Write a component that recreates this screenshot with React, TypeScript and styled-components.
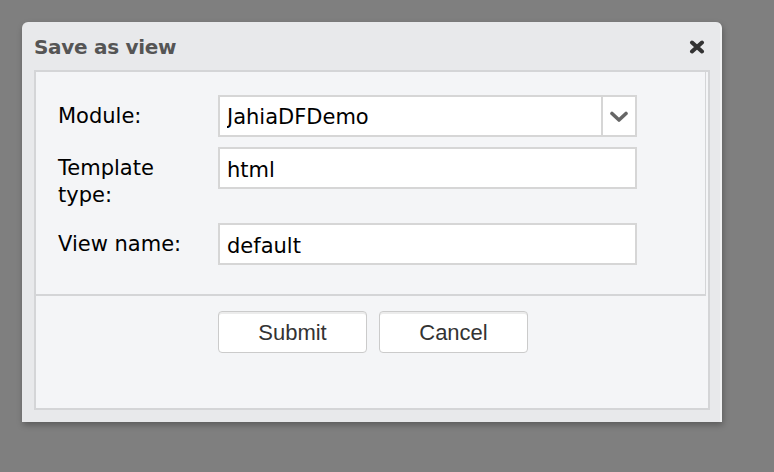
import React, { useState } from 'react'
import styled, { createGlobalStyle } from 'styled-components'

const GlobalStyle = createGlobalStyle`
  html, body {
    margin: 0;
    padding: 0;
    background: #7f7f7f;
    height: 100%;
  }
  body {
    font-family: "DejaVu Sans", Verdana, sans-serif;
  }
`

const CloseIcon = () => (
  <svg width="16" height="14" viewBox="0 0 16 14">
    <path
      d="M3 2.5 L13 11.5 M13 2.5 L3 11.5"
      stroke="#333"
      strokeWidth="4"
      strokeLinecap="round"
      fill="none"
    />
  </svg>
)

const ChevronIcon = () => (
  <svg width="20" height="12" viewBox="0 0 20 12">
    <path
      d="M3 2.5 L10 9 L17 2.5"
      stroke="#666"
      strokeWidth="3.6"
      strokeLinecap="round"
      strokeLinejoin="round"
      fill="none"
    />
  </svg>
)

export default function App() {
  const [module, setModule] = useState('JahiaDFDemo')
  const [templateType, setTemplateType] = useState('html')
  const [viewName, setViewName] = useState('default')

  return (
    <>
      <GlobalStyle />
      <Window>
        <TitleBar>
          <Title>Save as view</Title>
          <CloseButton aria-label="Close">
            <CloseIcon />
          </CloseButton>
        </TitleBar>
        <Body>
          <Form>
            <Row>
              <Label>Module:</Label>
              <Combo>
                <ComboInput
                  value={module}
                  onChange={e => setModule(e.target.value)}
                />
                <ComboTrigger>
                  <ChevronIcon />
                </ComboTrigger>
              </Combo>
            </Row>
            <Row>
              <Label>Template type:</Label>
              <TextField
                value={templateType}
                onChange={e => setTemplateType(e.target.value)}
              />
            </Row>
            <Row>
              <Label>View name:</Label>
              <TextField
                value={viewName}
                onChange={e => setViewName(e.target.value)}
              />
            </Row>
          </Form>
          <Footer>
            <Button>Submit</Button>
            <Button>Cancel</Button>
          </Footer>
        </Body>
      </Window>
    </>
  )
}

const Window = styled.div`
  margin: 22px 0 0 22px;
  width: 700px;
  height: 400px;
  box-sizing: border-box;
  background: #e8e9eb;
  border-radius: 6px 6px 0 0;
  border-right: 2px solid #f1f2f3;
  box-shadow: 1px 3px 6px rgba(0, 0, 0, 0.28);
  padding: 0 10px 12px 12px;
  display: flex;
  flex-flow: column;
`

const TitleBar = styled.div`
  height: 48px;
  flex-shrink: 0;
  display: flex;
  align-items: center;
  justify-content: space-between;
`

const Title = styled.span`
  font-family: "DejaVu Sans", Verdana, sans-serif;
  font-weight: bold;
  font-size: 20px;
  letter-spacing: -0.3px;
  color: #555;
  padding-top: 2px;
`

const CloseButton = styled.span`
  display: flex;
  margin-right: 5px;
  padding-top: 1px;
`

const Body = styled.div`
  flex: 1;
  display: flex;
  flex-flow: column;
  background: #f4f5f7;
  border: 2px solid #d4d5d7;
`

const Form = styled.div`
  margin-right: 2px;
  border-right: 1px solid #d4d5d7;
  border-bottom: 2px solid #d4d5d7;
  padding: 23px 0 29px 22px;
  display: flex;
  flex-flow: column;
  gap: 10px;
`

const Row = styled.div`
  display: flex;
  align-items: flex-start;
  gap: 10px;
`

const Label = styled.div`
  width: 150px;
  flex-shrink: 0;
  font-size: 21px;
  line-height: 27px;
  color: #000;
  padding: 8px 0 4px;
`

const Combo = styled.div`
  width: 419px;
  height: 42px;
  box-sizing: border-box;
  display: flex;
  background: #fff;
  border: 2px solid #d6d6d6;
`

const ComboInput = styled.input`
  flex: 1;
  min-width: 0;
  border: none;
  outline: none;
  background: transparent;
  font-family: "DejaVu Sans", Verdana, sans-serif;
  font-size: 21px;
  color: #000;
  padding: 2px 0 0 7px;
`

const ComboTrigger = styled.div`
  width: 32px;
  flex-shrink: 0;
  border-left: 2px solid #d6d6d6;
  display: flex;
  align-items: center;
  justify-content: center;
  padding-top: 1px;
`

const TextField = styled.input`
  width: 419px;
  height: 42px;
  box-sizing: border-box;
  border: 2px solid #d6d6d6;
  outline: none;
  background: #fff;
  font-family: "DejaVu Sans", Verdana, sans-serif;
  font-size: 21px;
  color: #000;
  padding: 3px 0 0 7px;
`

const Footer = styled.div`
  flex: 1;
  display: flex;
  justify-content: center;
  align-items: flex-start;
  gap: 12px;
  padding: 15px 0 0 2px;
`

const Button = styled.button`
  width: 149px;
  height: 42px;
  box-sizing: border-box;
  background: #fff;
  border: 1px solid #cbcbcb;
  border-radius: 4px;
  box-shadow: inset 0 2px 0 #ececec;
  font-family: "Liberation Sans", Arial, sans-serif;
  font-size: 22px;
  line-height: 38px;
  color: #333;
  padding: 1px 0 0;
  cursor: pointer;
`
